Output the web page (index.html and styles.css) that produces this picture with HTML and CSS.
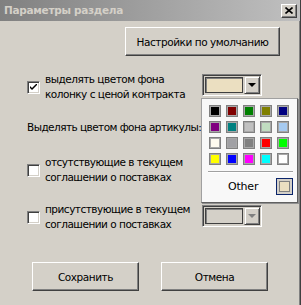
FILE: index.html
```html
<!DOCTYPE html>
<html>
<head>
<meta charset="utf-8">
<link rel="stylesheet" href="styles.css">
</head>
<body>
<div class="window">
  <div class="titlebar">
    <span class="title">Параметры раздела</span>
    <button class="close" type="button" aria-label="Закрыть">
      <svg width="8" height="7" viewBox="0 0 8 7"><path d="M0.5 0.5 L7.5 6.5 M7.5 0.5 L0.5 6.5" stroke="#000" stroke-width="1.6" fill="none"/></svg>
    </button>
  </div>
  <div class="body">
    <div class="defaults-row">
      <button class="btn btn-defaults" type="button">Настройки по умолчанию</button>
    </div>

    <div class="option option-first">
      <span class="check checked">
        <svg width="7" height="7" viewBox="0 0 7 7"><path d="M0 2 L0 4 L2 6 L7 1 L7 -1 L2 4 Z" fill="#000"/></svg>
      </span>
      <span class="label">выделять цветом фона<br>колонку с ценой контракта</span>
      <div class="combo">
        <span class="combo-swatch" style="background:#ebdfc1"></span>
        <span class="combo-arrow"><span class="tri"></span></span>
      </div>
    </div>

    <div class="section-label">Выделять цветом фона артикулы:</div>

    <div class="option option-second">
      <span class="check"></span>
      <span class="label">отсутствующие в текущем<br>соглашении о поставках</span>
    </div>

    <div class="option option-third">
      <span class="check"></span>
      <span class="label">присутствующие в текущем<br>соглашении о поставках</span>
      <div class="combo combo-disabled">
        <span class="combo-swatch"></span>
        <span class="combo-arrow"><span class="tri"></span></span>
      </div>
    </div>

    <div class="actions">
      <button class="btn btn-action" type="button">Сохранить</button>
      <button class="btn btn-action" type="button">Отмена</button>
    </div>
  </div>

  <div class="palette">
    <div class="swatches">
      <span class="sw" style="background:#000000"></span>
      <span class="sw" style="background:#800000"></span>
      <span class="sw" style="background:#008000"></span>
      <span class="sw" style="background:#808000"></span>
      <span class="sw" style="background:#000080"></span>
      <span class="sw" style="background:#800080"></span>
      <span class="sw" style="background:#008080"></span>
      <span class="sw" style="background:#c0c0c0"></span>
      <span class="sw" style="background:#c0dcc0"></span>
      <span class="sw" style="background:#a6caf0"></span>
      <span class="sw" style="background:#fffbf0"></span>
      <span class="sw" style="background:#a0a0a4"></span>
      <span class="sw" style="background:#808080"></span>
      <span class="sw" style="background:#ff0000"></span>
      <span class="sw" style="background:#00ff00"></span>
      <span class="sw" style="background:#ffff00"></span>
      <span class="sw" style="background:#0000ff"></span>
      <span class="sw" style="background:#ff00ff"></span>
      <span class="sw" style="background:#00ffff"></span>
      <span class="sw" style="background:#ffffff"></span>
    </div>
    <div class="sep"></div>
    <div class="other-row">
      <span class="other-text">Other</span>
      <span class="other-btn"><span class="other-fill" style="background:#ebdfc1"></span></span>
    </div>
  </div>
</div>
</body>
</html>
```
FILE: styles.css
```css
* { box-sizing: border-box; }
html, body { margin: 0; padding: 0; }
body {
  width: 301px;
  height: 305px;
  overflow: hidden;
  background: #d4d0c8;
  font-family: "DejaVu Sans", "Liberation Sans", sans-serif;
  font-size: 10.5px;
  letter-spacing: -0.5px;
  color: #000;
}
.window {
  position: relative;
  width: 301px;
  height: 305px;
  background: #d4d0c8;
  border-right: 1px solid #404040;
  box-shadow: inset -1px 0 #808080;
}
.titlebar {
  height: 21px;
  background: linear-gradient(to right, #808080, #c0c0c0);
  display: flex;
  align-items: center;
  justify-content: space-between;
  padding: 0 3px 0 4px;
}
.title {
  color: #d4d0c8;
  font-weight: bold;
  font-size: 10.5px;
  letter-spacing: -0.3px;
  line-height: 21px;
}
.close {
  width: 16px;
  height: 14px;
  padding: 0;
  margin: 0;
  background: #d4d0c8;
  border: 1px solid;
  border-color: #fff #404040 #404040 #fff;
  box-shadow: inset -1px -1px #808080;
  display: flex;
  align-items: center;
  justify-content: center;
}
.body {
  padding: 6px 0 0 27px;
}
.defaults-row {
  display: flex;
  justify-content: flex-end;
  padding-right: 20px;
}
.btn {
  font-family: "DejaVu Sans", "Liberation Sans", sans-serif;
  font-size: 10.5px;
  letter-spacing: -0.45px;
  color: #000;
  background: #d4d0c8;
  border: 1px solid;
  border-color: #fff #404040 #404040 #fff;
  box-shadow: inset -1px -1px #808080;
  padding: 0;
  margin: 0;
}
.btn-defaults {
  width: 155px;
  height: 29px;
}
.option {
  display: grid;
  grid-template-columns: 13px 152px 60px;
  column-gap: 5px;
  align-items: center;
}
.option-first { margin-top: 16px; }
.option-second { margin-top: 20px; }
.option-third { margin-top: 17px; }
.label {
  line-height: 15px;
  white-space: nowrap;
}
.section-label {
  margin-top: 18px;
  line-height: 15px;
  letter-spacing: -0.55px;
}
.check {
  width: 13px;
  height: 13px;
  background: #fff;
  border: 1px solid;
  border-color: #808080 #fff #fff #808080;
  box-shadow: inset 1px 1px #404040, inset -1px -1px #d4d0c8;
  display: flex;
  align-items: center;
  justify-content: center;
}
.combo {
  width: 60px;
  height: 22px;
  display: flex;
  align-items: stretch;
  border: 1px solid;
  border-color: #808080 #fff #fff #808080;
  box-shadow: inset 1px 1px #404040, inset -1px -1px #d4d0c8;
  padding: 1px;
  gap: 1px;
  margin-bottom: 4px;
}
.combo-disabled { margin-bottom: 3px; }
.combo-swatch {
  width: 38px;
  margin: 1px 0 1px 1px;
  border: 1px solid #404040;
  box-shadow: inset 1px 1px #808080;
  background: #d4d0c8;
}
.combo-arrow {
  width: 16px;
  background: #d4d0c8;
  border: 1px solid;
  border-color: #d4d0c8 #404040 #404040 #d4d0c8;
  box-shadow: inset 1px 1px #fff, inset -1px -1px #808080;
  display: flex;
  align-items: center;
  justify-content: center;
}
.tri {
  width: 0;
  height: 0;
  border-left: 4px solid transparent;
  border-right: 4px solid transparent;
  border-top: 4px solid #000;
}
.combo-disabled .tri { border-top-color: #808080; }
.actions {
  display: flex;
  gap: 22px;
  margin-top: 30px;
  padding-left: 5px;
}
.btn-action {
  width: 107px;
  height: 29px;
}
.palette {
  position: absolute;
  left: 201px;
  top: 98px;
  width: 97px;
  height: 105px;
  background: #f8f8f8;
  border: 1px solid #a0a0a0;
  border-right-color: #606060;
  border-bottom-color: #606060;
  box-shadow: 1px 1px 0 #909090;
  padding: 6px 0 0 7px;
}
.swatches {
  display: grid;
  grid-template-columns: repeat(5, 12px);
  grid-auto-rows: 12px;
  column-gap: 5px;
  row-gap: 4px;
}
.sw {
  border: 1px solid #808080;
  box-shadow: inset 0 0 0 1px #a8a8a8;
}
.sep {
  height: 2px;
  margin: 6px 4px 0 -1px;
  border-top: 1px solid #a0a0a0;
  border-bottom: 1px solid #fff;
}
.other-row {
  display: flex;
  align-items: center;
  justify-content: space-between;
  margin-top: 5px;
  padding: 0 4px 0 19px;
}
.other-text {
  font-size: 11px;
  letter-spacing: -0.2px;
  line-height: 16px;
}
.other-btn {
  width: 17px;
  height: 17px;
  border: 1px solid #0a246a;
  background: #d4d0c8;
  padding: 2px;
  display: flex;
}
.other-fill {
  flex: 1;
  border: 1px solid #808080;
}
```
